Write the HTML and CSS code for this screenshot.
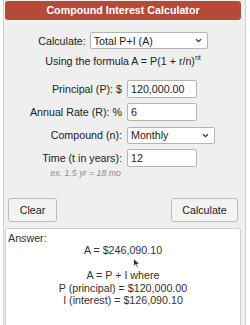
FILE: index.html
```
<!DOCTYPE html>
<html lang="en">
<head>
    <meta charset="UTF-8">
    <meta name="viewport" content="width=device-width, initial-scale=1.0">
    <title>Compound Interest Calculator</title>
    <link rel="stylesheet" href="styles.css">
</head>
<body>
    <div class="calc">
        <h1 class="calc-title">Compound Interest Calculator</h1>

        <div class="mode-row">
            <label for="mode">Calculate:</label>
            <span class="select-wrap mode-select">
                <select id="mode">
                    <option>Total P+I (A)</option>
                    <option>Principal (P)</option>
                    <option>Rate (R)</option>
                    <option>Time (t)</option>
                </select>
                <svg class="chevron" width="7" height="5" viewBox="0 0 7 5"><path d="M1 1.2 L3.5 3.6 L6 1.2" fill="none" stroke="#333" stroke-width="1.2"/></svg>
            </span>
        </div>
        <p class="formula">Using the formula A = P(1 + r/n)<sup>nt</sup></p>

        <div class="fields">
            <label for="principal">Principal (P): $</label>
            <input type="text" id="principal" value="120,000.00">

            <label for="rate">Annual Rate (R): %</label>
            <input type="text" id="rate" value="6">

            <label for="compound">Compound (n):</label>
            <span class="select-wrap compound-select">
                <select id="compound">
                    <option>Monthly</option>
                    <option>Yearly</option>
                    <option>Quarterly</option>
                    <option>Daily</option>
                </select>
                <svg class="chevron" width="7" height="5" viewBox="0 0 7 5"><path d="M1 1.2 L3.5 3.6 L6 1.2" fill="none" stroke="#333" stroke-width="1.2"/></svg>
            </span>

            <label for="time">Time (t in years):</label>
            <input type="text" id="time" value="12">

            <div class="hint">ex. 1.5 yr = 18 mo</div>
        </div>

        <div class="actions">
            <button type="button" class="btn-clear">Clear</button>
            <button type="button" class="btn-calc">Calculate</button>
        </div>

        <div class="answer">
            Answer:
            <div class="answer-body">
                A = $246,090.10<br>
                <br>
                A = P + I where<br>
                P (principal) = $120,000.00<br>
                I (interest) = $126,090.10
            </div>
            <svg class="cursor" width="8" height="11" viewBox="0 0 8 11">
                <path d="M0.5 0.5 L0.5 8.5 L2.6 6.6 L4.1 10 L5.4 9.4 L3.9 6.1 L6.8 6.1 Z" fill="#333" stroke="#fff" stroke-width="0.8"/>
            </svg>
        </div>
    </div>
</body>
</html>
```

FILE: styles.css
```
html, body {
    height: 100%;
}
body {
    margin: 0;
    font-family: "Liberation Sans", Arial, sans-serif;
    font-size: 10.7px;
    color: #222;
    background: #fff;
    overflow: hidden;
}
.calc {
    margin: 0 4px 0 3px;
    height: 100%;
    box-sizing: border-box;
    padding: 1px 4px 0 1px;
    background: #efefef;
    border-left: 1px solid #cfcfcf;
    border-right: 1px solid #cfcfcf;
}
.calc-title {
    margin: 0;
    height: 19px;
    line-height: 19px;
    background: #b5493a;
    border-radius: 3px;
    color: #fff;
    font-size: 10.7px;
    font-weight: bold;
    text-align: center;
}
.mode-row {
    display: flex;
    justify-content: center;
    align-items: center;
    gap: 4px;
    margin-top: 12px;
    height: 17px;
}
.select-wrap {
    position: relative;
    display: block;
    height: 17px;
}
.select-wrap select {
    appearance: none;
    display: block;
    width: 100%;
    height: 17px;
    box-sizing: border-box;
    padding: 0 3px;
    font-family: inherit;
    font-size: 10.7px;
    color: #222;
    border: 1px solid #b4b4b4;
    border-radius: 2px;
    background: #fff;
}
.chevron {
    position: absolute;
    right: 6px;
    top: 6px;
}
.mode-select {
    width: 118px;
}
.formula {
    margin: 6px 0 0;
    line-height: 13px;
    text-align: center;
}
.formula sup {
    font-size: 7px;
    line-height: 0;
}
.fields {
    display: grid;
    grid-template-columns: 117px auto;
    grid-template-rows: repeat(4, 23px) auto;
    column-gap: 5px;
    align-items: center;
    margin-top: 9.5px;
}
.fields label {
    text-align: right;
}
.fields input {
    justify-self: start;
    width: 70px;
    height: 18px;
    box-sizing: border-box;
    padding: 0 3px;
    border: 1px solid #b4b4b4;
    border-radius: 2px;
    font-family: inherit;
    font-size: 10.7px;
    color: #222;
    background: #fff;
}
.compound-select {
    justify-self: start;
    width: 88px;
}
.hint {
    grid-column: 1;
    margin-top: -2px;
    line-height: 11px;
    text-align: right;
    padding-right: 1px;
    font-size: 8.8px;
    font-style: italic;
    color: #8a8a8a;
}
.actions {
    display: flex;
    justify-content: space-between;
    padding: 0 3px;
    margin-top: 19px;
}
.actions button {
    height: 24px;
    border: 1px solid #bdbdbd;
    border-radius: 3px;
    background: #f3f3f3;
    font-family: inherit;
    font-size: 10.7px;
    color: #222;
}
.btn-clear {
    width: 49px;
}
.btn-calc {
    width: 67px;
}
.answer {
    position: relative;
    margin-top: 6px;
    height: 98px;
    box-sizing: border-box;
    padding: 3px 2px;
    border: 1px solid #cfcfcf;
    border-bottom: none;
    border-radius: 3px 3px 0 0;
    background: #fff;
    line-height: 12.5px;
    color: #333;
}
.answer-body {
    text-align: center;
}
.cursor {
    position: absolute;
    left: 127px;
    top: 29px;
}
```
